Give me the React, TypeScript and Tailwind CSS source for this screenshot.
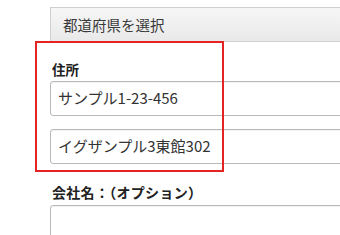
import React from 'react';

const font = { fontFamily: '"Noto Sans CJK JP", "Noto Sans", sans-serif' };

function Field({ value, className = '' }: { value?: string; className?: string }) {
  return (
    <div
      className={`h-[35px] rounded-[3px] border border-[#b9b9b9] bg-white pl-[7px] flex items-center text-[15px] text-[#333] shadow-[inset_0_1px_1px_rgba(0,0,0,0.06)] ${className}`}
    >
      {value}
    </div>
  );
}

export default function App() {
  return (
    <div className="relative w-[340px] h-[235px] overflow-hidden bg-white" style={font}>
      <div className="pt-[7px] pl-[50px] -mr-[20px] flex flex-col">
        <div className="h-[35px] border border-[#cfcfcf] bg-gradient-to-b from-[#f6f6f6] to-[#e9e9e9] pl-[12px] flex items-center text-[14.5px] text-[#3a3a3a]">
          都道府県を選択
        </div>

        <div className="mt-[18px] h-[18px] pl-[2px] flex items-center text-[13.5px] font-bold text-[#222]">住所</div>
        <Field value="サンプル1-23-456" className="mt-[3px]" />
        <Field value="イグザンプル3東館302" className="mt-[13px]" />

        <div className="mt-[19px] h-[18px] pl-[2px] flex items-center text-[14px] font-bold text-[#222] tracking-[0.3px]">
          会社名：（オプション）
        </div>
        <Field className="mt-[4px] h-[45px]" />
      </div>

      {/* annotation frame */}
      <div className="absolute left-[35px] top-[41px] w-[189px] h-[131px] border-2 border-[#e52323]" />
    </div>
  );
}
